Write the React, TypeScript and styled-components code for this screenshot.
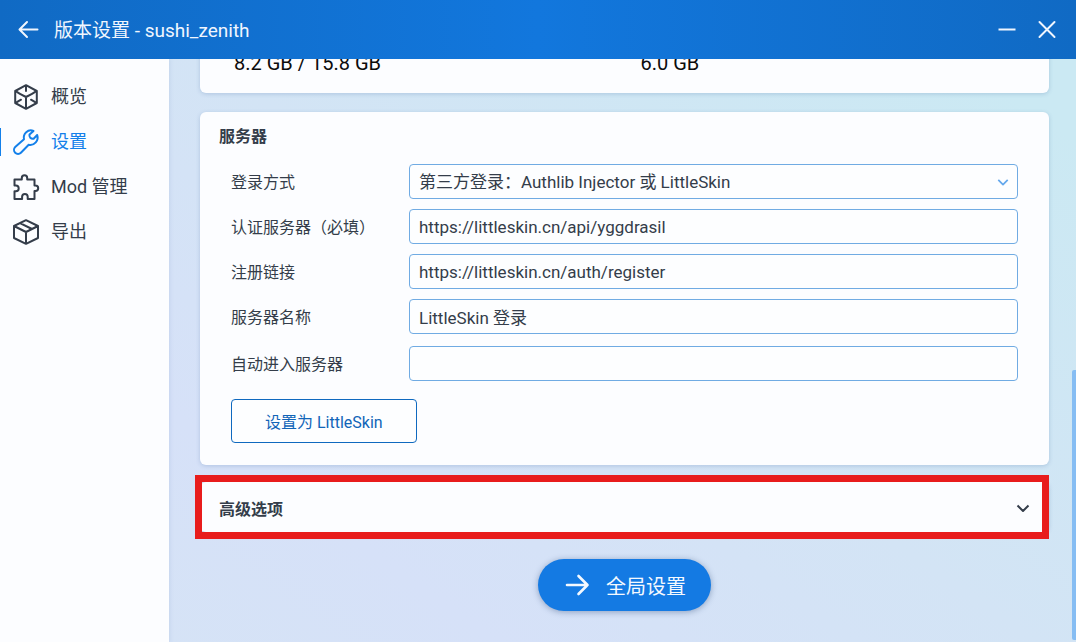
import React from "react";
import styled, { createGlobalStyle, css } from "styled-components";

const Global = createGlobalStyle`
  * { box-sizing: border-box; }
  html, body, #root { height: 100%; }
  body {
    margin: 0;
    overflow: hidden;
    font-family: Roboto, "Noto Sans CJK SC", sans-serif;
    font-size: 16px;
    color: #343d4a;
  }
  button, input, select { font: inherit; color: inherit; margin: 0; }
`;

const Window = styled.div`
  height: 100%;
  display: flex;
  flex-direction: column;
  background: linear-gradient(215deg, #cbe9f3 10%, #d3e4f5 48%, #d6e1f8 75%, #d5e4f5 100%);
`;

const TitleBar = styled.header`
  position: relative;
  z-index: 1;
  flex: none;
  height: 59px;
  padding: 0 19px 0 16px;
  display: flex;
  align-items: center;
  gap: 14px;
  color: #f0f6fe;
  background: linear-gradient(90deg, #106ac4, #1277dd 50%, #106ac4);
`;

const Title = styled.h1`
  flex: 1;
  margin: 0;
  padding-top: 2px;
  font-size: 19px;
  line-height: 28px;
  font-weight: 400;
`;

const WindowControls = styled.div`
  display: flex;
  gap: 20px;
`;

const IconButton = styled.button`
  display: flex;
  padding: 0;
  border: 0;
  background: none;
  cursor: pointer;
`;

const Body = styled.div`
  flex: 1;
  min-height: 0;
  display: flex;
`;

const Sidebar = styled.nav`
  flex: none;
  width: 169px;
  padding-top: 15px;
  display: flex;
  flex-direction: column;
  background: #fcfdff;
  box-shadow: 1px 0 4px rgba(70, 110, 170, 0.12);
`;

const NavItem = styled.a<{ $active?: boolean }>`
  height: 45px;
  padding-left: 12px;
  display: flex;
  align-items: center;
  gap: 11px;
  font-size: 18px;
  line-height: 26px;
  color: ${(p) => (p.$active ? "#1380ea" : "#343d4a")};
  text-decoration: none;
  ${(p) =>
    p.$active &&
    css`
      background: linear-gradient(#1380ea, #1380ea) 0 center / 1px 28px no-repeat;
    `}
`;

const Content = styled.main`
  flex: 1;
  min-width: 0;
  overflow: hidden;
  padding: 0 27px 0 31px;
`;

const Card = styled.section`
  border-radius: 6px;
  background: #fcfdff;
  box-shadow: 0 1px 4px rgba(60, 100, 160, 0.24);
`;

const MemoryCard = styled(Card)`
  margin-top: -16px;
  padding: 9px 34px 19px;
  display: grid;
  grid-template-columns: 1fr 1fr;
  gap: 32px;
  color: #0c0c0c;
  font-size: 20px;
  line-height: 22px;
`;

const ServerCard = styled(Card)`
  margin-top: 19px;
  padding: 13px 31px 22px;
`;

const CardTitle = styled.h2`
  margin: 0 -12px;
  font-size: 16px;
  line-height: 24px;
  font-weight: 700;
`;

const Fields = styled.div`
  margin-top: 15px;
  display: grid;
  gap: 10px;
`;

const Field = styled.label`
  display: grid;
  grid-template-columns: 178px 1fr;
  align-items: center;
  line-height: 24px;
  &:last-child { margin-top: 2px; }
`;

const FieldName = styled.span`
  padding-top: 2px;
`;

const control = css`
  width: 100%;
  height: 35px;
  padding: 0 9px;
  border: 1px solid #70abe3;
  border-radius: 4px;
  background: #fdfeff;
  outline: none;
`;

const TextInput = styled.input`
  ${control}
  && { font-size: 17px; }
`;

const SelectBox = styled.span`
  display: grid;
  align-items: center;
  > * { grid-area: 1 / 1; }
  > svg { justify-self: end; margin-right: 9px; pointer-events: none; color: #64a8ec; }
`;

const Select = styled.select`
  ${control}
  appearance: none;
  && { font-size: 17px; }
`;

const OutlineButton = styled.button`
  margin-top: 18px;
  height: 44px;
  padding: 0 33px;
  border: 1px solid #0f69bf;
  border-radius: 4px;
  background: #fdfeff;
  cursor: pointer;
  && { color: #1165b8; }
`;

const AdvancedCard = styled(Card)`
  position: relative;
  margin-top: 17px;
  &::after {
    content: "";
    position: absolute;
    inset: -7px 0 -7px -5px;
    border: 7px solid #e81c1c;
    pointer-events: none;
  }
`;

const AdvancedToggle = styled.button`
  width: 100%;
  height: 50px;
  padding: 2px 19px 0;
  display: flex;
  align-items: center;
  justify-content: space-between;
  border: 0;
  background: none;
  cursor: pointer;
  && { font-weight: 700; }
`;

const Footer = styled.div`
  margin-top: 27px;
  display: flex;
  justify-content: center;
`;

const PillButton = styled.button`
  height: 52px;
  padding: 0 25px 0 26px;
  display: flex;
  align-items: center;
  gap: 14px;
  border: 0;
  border-radius: 26px;
  background: #147ae3;
  box-shadow: 0 1px 6px rgba(30, 60, 110, 0.4);
  cursor: pointer;
  && { font-size: 20px; color: #f4f9ff; }
`;

const ScrollThumb = styled.div`
  position: fixed;
  right: 0;
  bottom: 2px;
  width: 4px;
  height: 42%;
  border-radius: 2px 0 0 2px;
  background: #86bdf3;
`;

const stroke = {
  fill: "none",
  stroke: "currentColor",
  strokeLinecap: "round" as const,
  strokeLinejoin: "round" as const,
};

const BackIcon = () => (
  <svg width="24" height="24" viewBox="0 0 24 24" strokeWidth="2" {...stroke}>
    <path d="M21.500 11.500H4M11 4 3.500 11.500 11 19" />
  </svg>
);
const ForwardIcon = () => (
  <svg width="28" height="28" viewBox="0 0 28 28" strokeWidth="2.600" {...stroke}>
    <path d="M3 14h20.500M14.500 5l9 9-9 9" />
  </svg>
);
const MinimizeIcon = () => (
  <svg width="20" height="20" viewBox="0 0 20 20" strokeWidth="2" {...stroke} strokeLinecap="butt">
    <path d="M1.500 9.500h17" />
  </svg>
);
const CloseIcon = () => (
  <svg width="20" height="20" viewBox="0 0 20 20" strokeWidth="2" {...stroke}>
    <path d="M2.500 2l15 15M17.500 2l-15 15" />
  </svg>
);
const OverviewIcon = () => (
  <svg width="28" height="28" viewBox="0 0 28 28" strokeWidth="2" {...stroke}>
    <path d="M14 2.200 24.800 8v12L14 25.800 3.200 20V8z" />
    <path d="M14 3v5M14 25V14M8 10.800 14 14l6-3.200M4 19.700l5-3M24 19.700l-5-3M4 8.300l4 2.500M24 8.300l-4 2.500" />
  </svg>
);
const WrenchIcon = () => (
  <svg width="28" height="28" viewBox="0 0 28 28" strokeWidth="2" {...stroke}>
    <path d="M21.500 2.900C16 .7 10.700 5.600 12 11.300L3.200 19a4 4 0 1 0 5.700 5.700l7.800-7.900c5.600 1.200 10.400-4.300 8.500-9.800l-3.600 3.700c-2.600.6-4.800-1.700-4.100-4.100z" />
  </svg>
);
const PuzzleIcon = () => (
  <svg width="28" height="28" viewBox="0 0 28 28" strokeWidth="2" {...stroke}>
    <path d="M2.500 6.500h7.300V5a2.700 2.700 0 0 1 5.400 0v1.500h7.300v6h1a2.700 2.700 0 0 1 0 5.400h-1v8h-6.800v-2.200a2.800 2.800 0 0 0-5.600 0v2.200H2.500v-7.700h1.400a2.800 2.800 0 0 0 0-5.600H2.500z" />
  </svg>
);
const BoxIcon = () => (
  <svg width="28" height="28" viewBox="0 0 28 28" strokeWidth="2" {...stroke}>
    <path d="M14 2.200 26 8v12L14 25.800 2 20V8zM2 8l12 6 12-6M14 14v11.500M8 5.100l12 5.900" />
  </svg>
);
const Chevron = ({ size }: { size: number }) => (
  <svg width={size} height={size} viewBox="0 0 14 14" strokeWidth="2" {...stroke} strokeLinecap="butt">
    <path d="M1.500 4.500 7 10l5.500-5.500" />
  </svg>
);

const navItems = [
  { label: "概览", icon: <OverviewIcon /> },
  { label: "设置", icon: <WrenchIcon />, active: true },
  { label: "Mod 管理", icon: <PuzzleIcon /> },
  { label: "导出", icon: <BoxIcon /> },
];

const textFields = [
  { label: "认证服务器（必填）", value: "https://littleskin.cn/api/yggdrasil" },
  { label: "注册链接", value: "https://littleskin.cn/auth/register" },
  { label: "服务器名称", value: "LittleSkin 登录" },
  { label: "自动进入服务器", value: "" },
];

export default function App() {
  return (
    <Window>
      <Global />
      <TitleBar>
        <IconButton aria-label="返回"><BackIcon /></IconButton>
        <Title>版本设置 - sushi_zenith</Title>
        <WindowControls>
          <IconButton aria-label="最小化"><MinimizeIcon /></IconButton>
          <IconButton aria-label="关闭"><CloseIcon /></IconButton>
        </WindowControls>
      </TitleBar>
      <Body>
        <Sidebar>
          {navItems.map((item) => (
            <NavItem key={item.label} href="#" $active={item.active}>
              {item.icon}
              {item.label}
            </NavItem>
          ))}
        </Sidebar>
        <Content>
          <MemoryCard>
            <span>8.2 GB / 15.8 GB</span>
            <span>6.0 GB</span>
          </MemoryCard>
          <ServerCard>
            <CardTitle>服务器</CardTitle>
            <Fields>
              <Field>
                <FieldName>登录方式</FieldName>
                <SelectBox>
                  <Select>
                    <option>第三方登录：Authlib Injector 或 LittleSkin</option>
                  </Select>
                  <Chevron size={12} />
                </SelectBox>
              </Field>
              {textFields.map((f) => (
                <Field key={f.label}>
                  <FieldName>{f.label}</FieldName>
                  <TextInput defaultValue={f.value} />
                </Field>
              ))}
            </Fields>
            <OutlineButton>设置为 LittleSkin</OutlineButton>
          </ServerCard>
          <AdvancedCard>
            <AdvancedToggle>
              高级选项
              <Chevron size={14} />
            </AdvancedToggle>
          </AdvancedCard>
          <Footer>
            <PillButton>
              <ForwardIcon />
              全局设置
            </PillButton>
          </Footer>
        </Content>
      </Body>
      <ScrollThumb />
    </Window>
  );
}
